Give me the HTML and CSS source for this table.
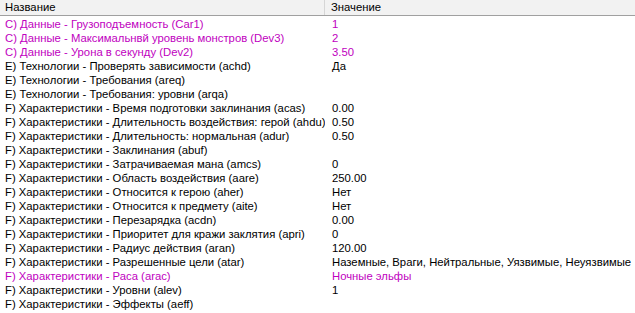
FILE: index.html
```html
<!DOCTYPE html>
<html>
<head>
<meta charset="utf-8">
<link rel="stylesheet" href="styles.css">
</head>
<body>
<div class="list">
  <div class="head">
    <div class="hcell name">Название</div>
    <div class="hcell val">Значение</div>
  </div>
  <div class="rows">
    <div class="row mag"><span class="c1">C) Данные - Грузоподъемность (Car1)</span><span class="c2">1</span></div>
    <div class="row mag"><span class="c1">C) Данные - Максимальнвй уровень монстров (Dev3)</span><span class="c2">2</span></div>
    <div class="row mag"><span class="c1">C) Данные - Урона в секунду (Dev2)</span><span class="c2">3.50</span></div>
    <div class="row"><span class="c1">E) Технологии - Проверять зависимости (achd)</span><span class="c2">Да</span></div>
    <div class="row"><span class="c1">E) Технологии - Требования (areq)</span><span class="c2"></span></div>
    <div class="row"><span class="c1">E) Технологии - Требования: уровни (arqa)</span><span class="c2"></span></div>
    <div class="row"><span class="c1">F) Характеристики - Время подготовки заклинания (acas)</span><span class="c2">0.00</span></div>
    <div class="row"><span class="c1">F) Характеристики - Длительность воздействия: герой (ahdu)</span><span class="c2">0.50</span></div>
    <div class="row"><span class="c1">F) Характеристики - Длительность: нормальная (adur)</span><span class="c2">0.50</span></div>
    <div class="row"><span class="c1">F) Характеристики - Заклинания (abuf)</span><span class="c2"></span></div>
    <div class="row"><span class="c1">F) Характеристики - Затрачиваемая мана (amcs)</span><span class="c2">0</span></div>
    <div class="row"><span class="c1">F) Характеристики - Область воздействия (aare)</span><span class="c2">250.00</span></div>
    <div class="row"><span class="c1">F) Характеристики - Относится к герою (aher)</span><span class="c2">Нет</span></div>
    <div class="row"><span class="c1">F) Характеристики - Относится к предмету (aite)</span><span class="c2">Нет</span></div>
    <div class="row"><span class="c1">F) Характеристики - Перезарядка (acdn)</span><span class="c2">0.00</span></div>
    <div class="row"><span class="c1">F) Характеристики - Приоритет для кражи заклятия (apri)</span><span class="c2">0</span></div>
    <div class="row"><span class="c1">F) Характеристики - Радиус действия (aran)</span><span class="c2">120.00</span></div>
    <div class="row"><span class="c1">F) Характеристики - Разрешенные цели (atar)</span><span class="c2">Наземные, Враги, Нейтральные, Уязвимые, Неуязвимые</span></div>
    <div class="row mag"><span class="c1">F) Характеристики - Раса (arac)</span><span class="c2">Ночные эльфы</span></div>
    <div class="row"><span class="c1">F) Характеристики - Уровни (alev)</span><span class="c2">1</span></div>
    <div class="row"><span class="c1">F) Характеристики - Эффекты (aeff)</span><span class="c2"></span></div>
  </div>
</div>
</body>
</html>
```
FILE: styles.css
```css
html, body {
  margin: 0;
  padding: 0;
  background: #ffffff;
}
.list {
  width: 635px;
  height: 313px;
  overflow: hidden;
  font-family: "Liberation Sans", Arial, sans-serif;
  font-size: 11.3px;
  color: #000;
}
.head {
  display: grid;
  grid-template-columns: 325px 1fr;
  height: 15px;
  background: #f2f2f2;
  border-bottom: 1px solid #a0a0a0;
}
.hcell {
  line-height: 15px;
  white-space: nowrap;
}
.hcell.name {
  padding-left: 5px;
  border-right: 1px solid #d6d6d6;
}
.hcell.val {
  padding-left: 6px;
}
.rows {
  display: flex;
  flex-direction: column;
  padding-top: 1px;
}
.row {
  display: grid;
  grid-template-columns: 325px 1fr;
  height: 14px;
  line-height: 14px;
  white-space: nowrap;
}
.row .c1 {
  padding-left: 5px;
  overflow: hidden;
}
.row .c2 {
  padding-left: 7px;
}
.row.mag {
  color: #c000c0;
}
```
